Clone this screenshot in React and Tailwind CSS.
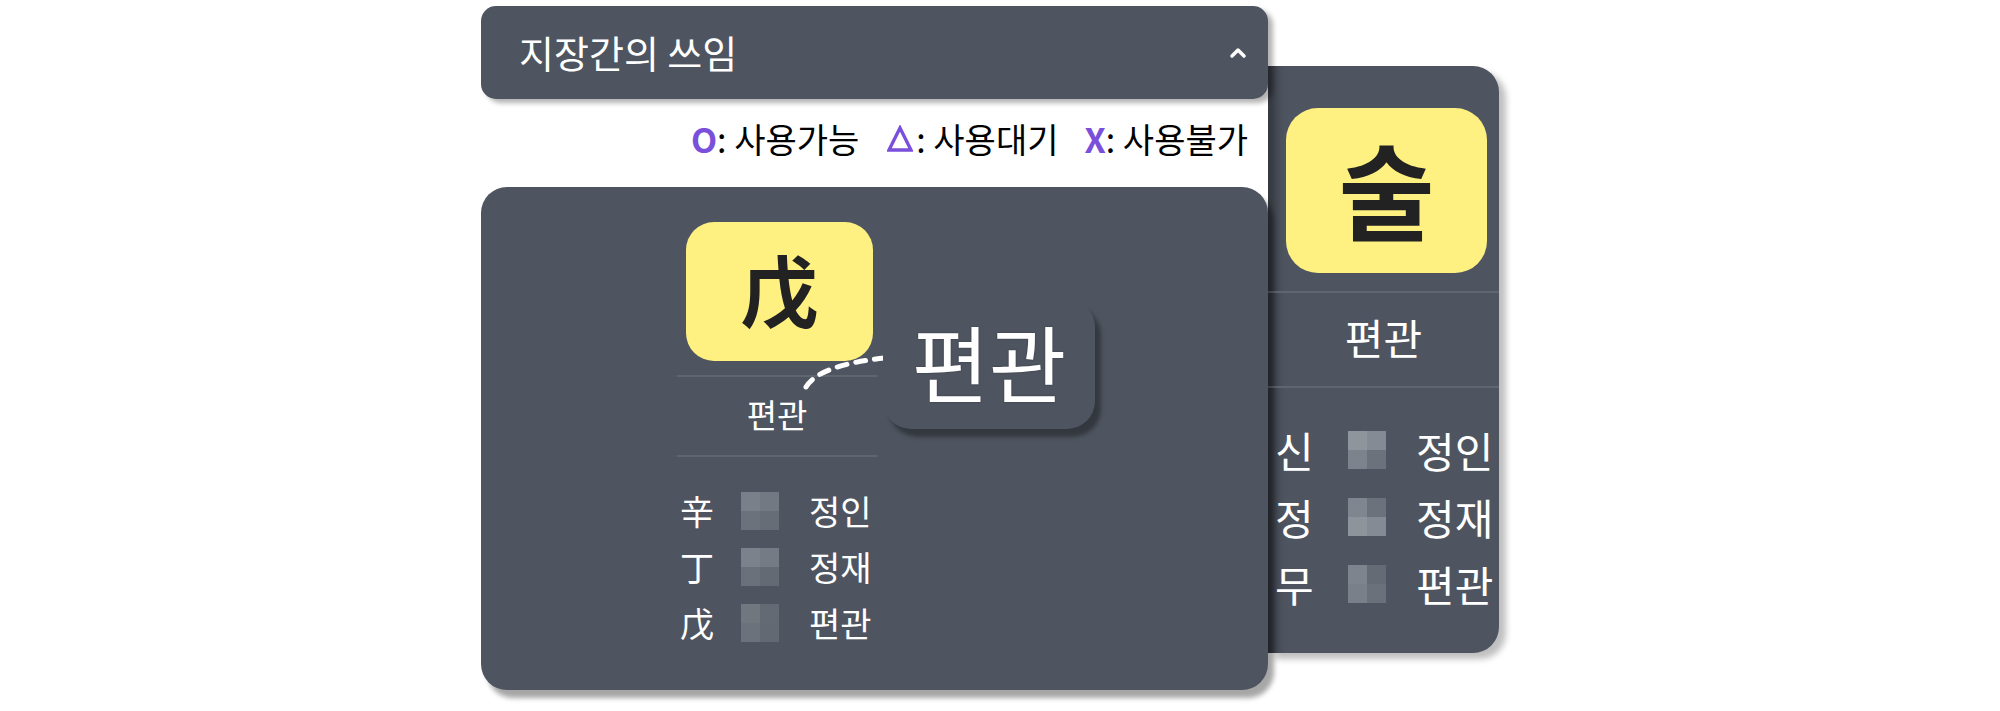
import { ChevronUp } from 'lucide-react';

const panel = 'bg-[#4f5560]';

const Mosaic = ({ colors }) => (
  <div className="grid grid-cols-2 w-[38px] h-[38px]">
    {colors.map((c, i) => (
      <div key={i} className="w-[19px] h-[19px]" style={{ backgroundColor: c }} />
    ))}
  </div>
);

const mainRows = [
  { ch: '辛', name: '정인', m: ['#7a8089', '#737983', '#6c727c', '#676d77'] },
  { ch: '丁', name: '정재', m: ['#7c828b', '#757b85', '#6b717b', '#646a74'] },
  { ch: '戊', name: '편관', m: ['#71777f', '#646a74', '#6c727c', '#636973'] },
];

const sideRows = [
  { ch: '신', name: '정인', m: ['#8f959d', '#858b94', '#7d838c', '#6c727c'] },
  { ch: '정', name: '정재', m: ['#80868f', '#6c727c', '#8e949c', '#858b94'] },
  { ch: '무', name: '편관', m: ['#7e848d', '#656b75', '#7a808a', '#6b717b'] },
];

const App = () => {
  return (
    <div
      className="w-full min-h-[711px] bg-white flex items-start pl-[481px] pt-[6px] text-black"
      style={{ fontFamily: '"Noto Sans CJK KR", "Noto Sans", sans-serif' }}
    >
      {/* Left column */}
      <div className="relative z-10 w-[787px] flex flex-col">
        {/* Header */}
        <div className={`${panel} h-[93px] rounded-[15px] flex items-center justify-between pl-[38px] pr-[18px] shadow-[5px_4px_5px_rgba(0,0,0,0.3)]`}>
          <h2 className="text-[38px] text-white font-normal leading-none -mt-[2px]">지장간의 쓰임</h2>
          <ChevronUp size={24} strokeWidth={3.5} className="text-white" />
        </div>

        {/* Legend */}
        <div className="h-[88px] flex items-center justify-end pr-[20px] pb-[8px] text-[34px] leading-none">
          <span className="font-bold text-[#7a4fdb]">O</span>
          <span>: 사용가능</span>
          <svg className="ml-[28px] mr-[3px]" width="26" height="28" viewBox="0 0 26 28" aria-label="△">
            <path d="M13 3 L24 25 L2 25 Z" fill="none" stroke="#7a4fdb" strokeWidth="3.4" strokeLinejoin="miter" />
          </svg>
          <span>: 사용대기</span>
          <span className="ml-[26px] font-bold text-[#7a4fdb]">X</span>
          <span>: 사용불가</span>
        </div>

        {/* Main card */}
        <div className={`${panel} relative h-[503px] rounded-[26px] shadow-[6px_8px_5px_rgba(0,0,0,0.35)]`}>
          <div className="ml-[196px] pt-[35px] w-[200px] flex flex-col">
            <div className="ml-[9px] w-[187px] h-[139px] rounded-[28px] bg-[#fef182] flex items-center justify-center">
              <span className="text-[78px] font-bold text-[#222] leading-none -mt-[8px]">戊</span>
            </div>
            <div className="mt-[14px] border-t-2 border-[#5f666f] h-[80px] flex items-center justify-center">
              <span className="text-[33px] text-white leading-none -mt-[4px]">편관</span>
            </div>
            <div className="border-t-2 border-[#5f666f] pt-[26px] flex flex-col">
              {mainRows.map((r) => (
                <div key={r.ch} className="h-[56px] grid grid-cols-[61px_68px_1fr] items-center text-[34px] leading-none text-white pl-[3px]">
                  <span>{r.ch}</span>
                  <Mosaic colors={r.m} />
                  <span className="whitespace-nowrap">{r.name}</span>
                </div>
              ))}
            </div>
          </div>

          {/* Magnified label */}
          <svg className="absolute left-[320px] top-[166px]" width="88" height="46" viewBox="0 0 88 46">
            <path d="M5 34 Q18 12 84 5" fill="none" stroke="white" strokeWidth="5" strokeLinecap="round" strokeDasharray="10 9" />
          </svg>
          <div className={`${panel} absolute left-[402px] top-[112px] w-[212px] h-[130px] rounded-[28px] flex items-center justify-center shadow-[6px_8px_4px_rgba(0,0,0,0.35)]`}>
            <span className="text-[84px] text-white leading-none -mt-[6px] [text-shadow:0_0_2px_rgba(0,0,0,0.4)]">편관</span>
          </div>
        </div>
      </div>

      {/* Right card */}
      <div className={`${panel} mt-[60px] w-[231px] h-[587px] rounded-r-[26px] flex flex-col shadow-[inset_16px_0_10px_-8px_rgba(0,0,0,0.35),7px_6px_6px_rgba(0,0,0,0.25)]`}>
        <div className="ml-[18px] mt-[42px] w-[201px] h-[165px] rounded-[32px] bg-[#fef182] flex items-center justify-center">
          <span className="text-[104px] font-bold text-[#222] leading-none -mt-[6px]">술</span>
        </div>
        <div className="mt-[18px] border-t-2 border-[#5f666f] h-[95px] flex items-center justify-center">
          <span className="text-[42px] text-white leading-none -mt-[6px]">편관</span>
        </div>
        <div className="border-t-2 border-[#5f666f] pt-[28px] flex flex-col">
          {sideRows.map((r) => (
            <div key={r.ch} className="h-[67px] grid grid-cols-[73px_68px_1fr] items-center text-[42px] leading-none text-white pl-[7px]">
              <span>{r.ch}</span>
              <Mosaic colors={r.m} />
              <span className="whitespace-nowrap">{r.name}</span>
            </div>
          ))}
        </div>
      </div>
    </div>
  );
};

export default App;
